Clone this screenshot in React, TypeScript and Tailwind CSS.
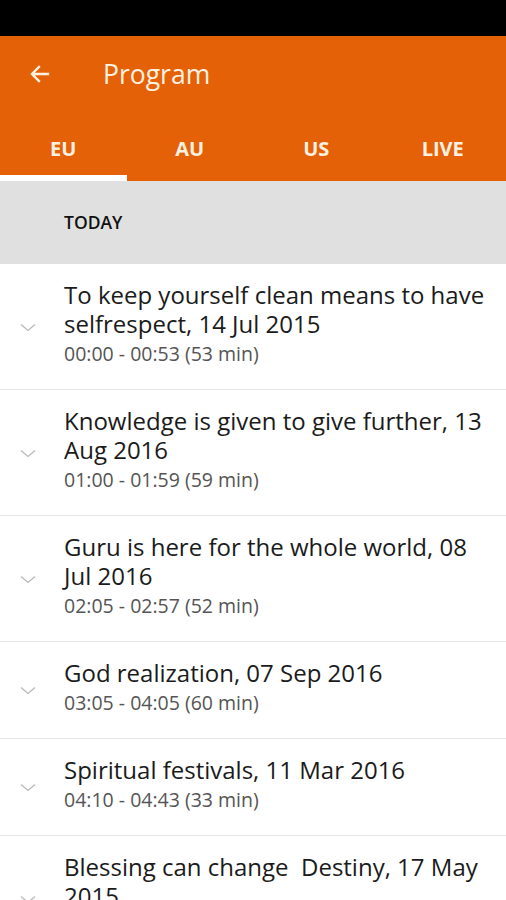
import React from 'react';

type Item = {
  title: string;
  time: string;
};

const ITEMS: Item[] = [
  { title: 'To keep yourself clean means to have selfrespect, 14 Jul 2015', time: '00:00 - 00:53 (53 min)' },
  { title: 'Knowledge is given to give further, 13 Aug 2016', time: '01:00 - 01:59 (59 min)' },
  { title: 'Guru is here for the whole world, 08 Jul 2016', time: '02:05 - 02:57 (52 min)' },
  { title: 'God realization, 07 Sep 2016', time: '03:05 - 04:05 (60 min)' },
  { title: 'Spiritual festivals, 11 Mar 2016', time: '04:10 - 04:43 (33 min)' },
  { title: 'Blessing can change  Destiny, 17 May 2015', time: '04:45 - 05:40 (55 min)' }
];

const TABS = ['EU', 'AU', 'US', 'LIVE'];

const Chevron = () => (
  <svg width="16" height="9" viewBox="0 0 16 9" fill="none" className="shrink-0">
    <path d="M1 1.5 L8 7.5 L15 1.5" stroke="#b9b9b9" strokeWidth="1.3" />
  </svg>
);

export default function App() {
  return (
    <div className="w-[506px] h-[900px] overflow-hidden bg-white font-['Open_Sans','Noto_Sans',sans-serif]">
      <div className="h-[36px] bg-black" />
      <div className="bg-[#e46108]">
        <div className="h-[76px] flex items-center">
          <svg width="24" height="24" viewBox="0 0 24 24" className="ml-[28px]" fill="none">
            <path d="M20 12 H5 M11 5 L4 12 L11 19" stroke="#fdf1e1" strokeWidth="2.4" strokeLinecap="square" />
          </svg>
          <span className="ml-[51px] text-[26.5px] text-[#fdf1e1] leading-none">Program</span>
        </div>
        <div className="grid grid-cols-4 h-[69px]">
          {TABS.map((t, i) => (
            <div key={t} className="flex flex-col">
              <div className="flex-1 flex items-center justify-center text-[20px] font-bold text-[#fdf1e1] pt-[10px]">
                {t}
              </div>
              <div className={i === 0 ? 'h-[6px] bg-white' : 'h-[6px]'} />
            </div>
          ))}
        </div>
      </div>
      <div className="h-[83px] bg-[#e0e0e0] flex items-center pl-[64px] text-[17.5px] font-semibold text-[#111]">
        TODAY
      </div>
      <div>
        {ITEMS.map(item => (
          <div key={item.title} className="flex items-center border-b border-[#e6e6e6] pt-[16px] pb-[19px]">
            <div className="w-[64px] flex justify-start pl-[20px] pt-[4px]">
              <Chevron />
            </div>
            <div className="flex-1 pr-[10px]">
              <div className="text-[24px] leading-[29px] text-[#1b1b1b] font-medium whitespace-pre-wrap">
                {item.title}
              </div>
              <div className="text-[19.5px] leading-[32px] text-[#555]">{item.time}</div>
            </div>
          </div>
        ))}
      </div>
    </div>
  );
}
